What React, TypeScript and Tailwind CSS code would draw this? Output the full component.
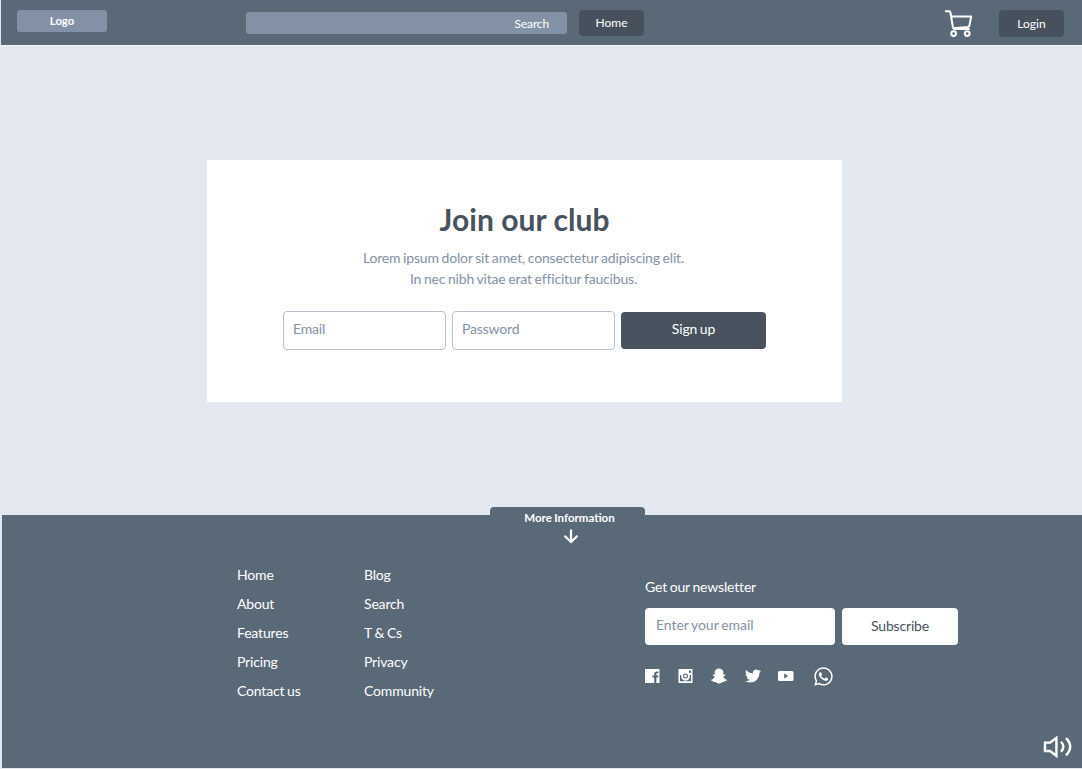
import React from "react";
import { FaSnapchatGhost, FaTwitter, FaWhatsapp } from "react-icons/fa";

const mainLinks = ["Home", "About", "Features", "Pricing", "Contact us"];
const moreLinks = ["Blog", "Search", "T & Cs", "Privacy", "Community"];

function CartIcon() {
  return (
    <svg width="28" height="28" viewBox="0 0 28 28" fill="none" stroke="#fff" strokeWidth="2" strokeLinejoin="round">
      <path d="M0 1.2H4.2Q5.2 1.2 5.4 2.4L8 17.6Q8.3 19 9.6 19H24.6" />
      <path d="M6 6.4H26.2L24.4 15.6Q24.2 16.8 23 16.9L8.2 18.2" />
      <circle cx="8.6" cy="23.6" r="2.4" />
      <circle cx="22.2" cy="23.6" r="2.4" />
    </svg>
  );
}

function FacebookIcon() {
  return (
    <svg width="15" height="14" viewBox="0 0 15 14">
      <path fill="#fff" fillRule="evenodd" d="M0 0H14Q14.5 0 14.5 0.5V13.5Q14.5 14 14 14H11.4V8.6H13.2L13.5 6.6H11.4V5.3C11.4 4.5 11.7 4.2 12.4 4.2H13.5V2.4H12C10.2 2.4 9.2 3.4 9.2 5V6.6H7.4V8.6H9.2V14H0Z" />
    </svg>
  );
}

function InstagramIcon() {
  return (
    <svg width="15" height="14" viewBox="0 0 15 14">
      <path fill="#fff" fillRule="evenodd" d="M0.5 0H14.5V14H0.5ZM10.9 1.6V3.8H13.1V1.6ZM2 6V12.2H13V6H11.7A4.4 4.4 0 1 1 3.3 6Z" />
      <circle cx="7.5" cy="7" r="3.7" fill="#fff" />
      <circle cx="7.5" cy="7" r="2.5" fill="#5a6978" />
      <circle cx="7.5" cy="7" r="1.5" fill="#fff" />
    </svg>
  );
}

function YoutubeIcon() {
  return (
    <svg width="16" height="10" viewBox="0 0 16 10">
      <path fill="#fff" fillRule="evenodd" d="M1.5 0H14Q15.5 0 15.5 1.5V8.5Q15.5 10 14 10H1.5Q0 10 0 8.5V1.5Q0 0 1.5 0ZM6.2 2.6V7.4L10.2 5Z" />
    </svg>
  );
}

function VolumeIcon() {
  return (
    <svg width="30" height="24" viewBox="0 0 30 24" fill="none" stroke="#fff" strokeWidth="2.4">
      <path d="M2 7.6H7L13.4 2.8V20.8L7 16H2Z" />
      <path d="M18 6.8Q22.6 11.7 18 16.6M23 3.2Q31.4 11.7 23 20.4" />
    </svg>
  );
}

function LinkColumn({ links }: { links: string[] }) {
  return (
    <ul className="w-[127px]">
      {links.map((link) => (
        <li key={link} className="h-[29px] whitespace-nowrap leading-5">
          {link}
        </li>
      ))}
    </ul>
  );
}

export default function App() {
  return (
    <div className="flex h-[769px] w-[1082px] flex-col overflow-hidden bg-[#e4e8f1] font-['Lato',sans-serif] text-[14px] tracking-[-0.17px] text-white [word-spacing:-0.7px]">
      <header className="ml-px flex h-[45px] shrink-0 items-start bg-[#5a6978] text-[12px] tracking-normal shadow-[0_1px_0_#f5f7fb]">
        <div className="mt-[10px] ml-4 h-[22px] w-[90px] rounded-[3px] bg-[#8391a7] text-center text-[11.3px] leading-[22px] font-bold">
          Logo
        </div>
        <div className="mt-3 ml-[139px] h-[22px] w-[321px] rounded-[3px] bg-[#8391a7] pr-[18px] text-right leading-[23px] tracking-[-0.15px]">
          Search
        </div>
        <div className="mt-[10px] ml-[12px] h-[26px] w-[65px] rounded-[4px] bg-[#47515e] text-center leading-[26px]">
          Home
        </div>
        <div className="mt-[10px] ml-[301px] w-7">
          <CartIcon />
        </div>
        <div className="mt-[10px] ml-[26px] h-[27px] w-[65px] rounded-[4px] bg-[#47515e] text-center leading-[27px]">
          Login
        </div>
      </header>

      <main className="h-[470px] shrink-0 pt-[115px] pl-[207px]">
        <section className="flex h-[242px] w-[635px] flex-col items-center bg-white text-[#8492a6]">
          <h1 className="mt-[39px] text-[30px] leading-10 font-bold tracking-[0.05px] text-[#47525e] [word-spacing:0px]">Join our club</h1>
          <p className="mt-[8px] mr-[2px] text-center leading-[21px]">
            Lorem ipsum dolor sit amet, consectetur adipiscing elit.
            <br />
            In nec nibh vitae erat efficitur faucibus.
          </p>
          <div className="mt-[22px] flex gap-[6px]">
            <div className="h-[39px] w-[163px] rounded-[4px] border border-[#b6bfcc] pl-[9px] leading-[34px]">Email</div>
            <div className="h-[39px] w-[163px] rounded-[4px] border border-[#b6bfcc] pl-[9px] leading-[34px]">Password</div>
            <div className="mt-px h-[37px] w-[145px] rounded-[4px] bg-[#47525e] text-center leading-[34px] text-white">
              Sign up
            </div>
          </div>
        </section>
      </main>

      <footer className="relative ml-[2px] flex h-[253px] shrink-0 bg-[#5a6978]">
        <div className="absolute -top-2 left-[488px] flex h-10 w-[155px] flex-col items-center rounded-t-[4px] bg-[#5a6978]">
          <span className="mr-[-4px] text-[11.5px] leading-[22px] font-bold tracking-normal [word-spacing:-0.4px]">More Information</span>
          <svg className="ml-[7px]" width="16" height="15" viewBox="0 0 16 15" fill="none" stroke="#fff" strokeWidth="2.2">
            <path d="M8 0.5V12.5M1.5 6.8L8 13L14.5 6.8" />
          </svg>
        </div>
        <nav className="flex pt-[50px] pl-[235px]">
          <LinkColumn links={mainLinks} />
          <LinkColumn links={moreLinks} />
        </nav>
        <div className="ml-[154px] pt-[62px]">
          <div className="leading-5">Get our newsletter</div>
          <div className="mt-[11px] flex gap-[7px]">
            <div className="h-[37px] w-[190px] rounded-[4px] bg-white pl-[11px] leading-[34px] tracking-[-0.05px] text-[#8492a6]">Enter your email</div>
            <div className="h-[37px] w-[116px] rounded-[4px] bg-white text-center leading-[36px] text-[#47525e]">Subscribe</div>
          </div>
          <div className="mt-[21px] flex h-5 items-center">
            <FacebookIcon />
            <div className="ml-[18px]"><InstagramIcon /></div>
            <FaSnapchatGhost className="ml-[18px]" size={16} />
            <FaTwitter className="ml-[18px]" size={16} />
            <div className="ml-[17px]"><YoutubeIcon /></div>
            <FaWhatsapp className="ml-[19px] mt-px" size={21} />
          </div>
        </div>
        <div className="absolute right-[9px] bottom-[9px]">
          <VolumeIcon />
        </div>
      </footer>
    </div>
  );
}
